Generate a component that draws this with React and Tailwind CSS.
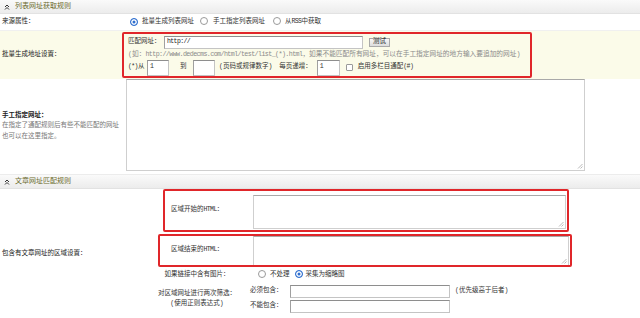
import React from "react"

const Lat = ({ children }) => <span className="tracking-[-0.6px]">{children}</span>

const Radio = ({ on }) => (
  <span
    className={
      on
        ? "inline-block w-[8px] h-[8px] rounded-full border border-[#2f6fcf] bg-[#2f6fcf] shadow-[inset_0_0_0_1.5px_#fff]"
        : "inline-block w-[8px] h-[8px] rounded-full border border-[#9a9a9a] bg-white"
    }
  />
)

const Box = ({ className }) => (
  <span className={`inline-block border border-[#c4c4c4] border-t-[#8e8e8e] border-l-[#a0a0a0] bg-white ${className}`} />
)

const Area = ({ className }) => (
  <div className={`relative border border-[#cfcfcf] border-t-[#a9a9a9] bg-white ${className}`}>
    <svg className="absolute right-[1px] bottom-[1px]" width="6" height="6" viewBox="0 0 6 6">
      <path d="M5.5 1 L1 5.5 M5.5 3.5 L3.5 5.5" stroke="#a8a8a8" strokeWidth="0.8" />
    </svg>
  </div>
)

const Header = ({ title }) => (
  <div className="h-[14px] flex items-center gap-[5px] pl-[4px] border-b border-[#e2e2e2] bg-gradient-to-b from-[#fafafa] to-[#ececec] text-[#6b6b2c] text-[7px]">
    <svg width="6" height="6" viewBox="0 0 6 6">
      <path d="M1 3 L3 1 L5 3 M1 5.5 L3 3.5 L5 5.5" stroke="#333" strokeWidth="1" fill="none" />
    </svg>
    <span>{title}</span>
  </div>
)

export default function App() {
  return (
    <div className="w-[640px] h-[318px] overflow-hidden bg-white text-[#333] text-[6.5px] leading-none font-['Liberation_Mono','Noto_Sans_CJK_SC',monospace]">
      <Header title="列表网址获取规则" />

      {/* 来源属性 */}
      <div className="h-[17px] flex items-center border-b border-[#f0f0f0]">
        <div className="w-[122px] pl-[2px] text-[#222]">来源属性：</div>
        <div className="flex items-center pl-[8px]">
          <Radio on />
          <span className="ml-[4px]">批量生成列表网址</span>
          <span className="ml-[6px]"><Radio /></span>
          <span className="ml-[5px]">手工指定列表网址</span>
          <span className="ml-[8px]"><Radio /></span>
          <span className="ml-[4px]">从<Lat>RSS</Lat>中获取</span>
        </div>
      </div>

      {/* 批量生成地址设置 */}
      <div className="h-[48px] flex items-center bg-[#fbfbe9]">
        <div className="w-[122px] pl-[2px] text-[#222]">批量生成地址设置：</div>
        <div className="w-[410px] h-[46px] border-2 border-[#e0262a] rounded-[2px] pl-[4px] flex flex-col">
          <div className="h-[14px] flex items-center mt-[1px]">
            <span className="w-[36px]">匹配网址：</span>
            <Box className="w-[199px] h-[13px]" />
            <span className="-ml-[196px] w-[196px] text-[#222]"><Lat>http://</Lat></span>
            <span className="ml-[6px] px-[3px] h-[9px] flex items-center border border-[#a9a9a9] bg-gradient-to-b from-[#f7f7f7] to-[#dcdcdc] text-[#222]">测试</span>
          </div>
          <div className="h-[10px] flex items-center text-[#8a8a8a] text-[6.7px] whitespace-nowrap">
            (如：<Lat>http://www.dedecms.com/html/test/list_(*).html</Lat>，如果不能匹配所有网址，可以在手工指定网址的地方输入要追加的网址)
          </div>
          <div className="h-[17px] flex items-center">
            <span className="w-[19px]"><Lat>(*)</Lat>从</span>
            <Box className="w-[22px] h-[16px]" />
            <span className="-ml-[19px] w-[19px]"><Lat>1</Lat></span>
            <span className="ml-[11px] w-[13px]">到</span>
            <Box className="w-[22px] h-[16px]" />
            <span className="ml-[4px]">(页码或规律数字)</span>
            <span className="ml-[7px]">每页递增：</span>
            <Box className="ml-[5px] w-[23px] h-[16px]" />
            <span className="-ml-[20px] w-[20px]"><Lat>1</Lat></span>
            <span className="ml-[6px] w-[7px] h-[7px] border border-[#9a9a9a] rounded-[1px] bg-white" />
            <span className="ml-[5px]">启用多栏目通配<Lat>(#)</Lat></span>
          </div>
        </div>
      </div>

      {/* 手工指定网址 */}
      <div className="h-[96px] flex items-center border-b border-[#ececec]">
        <div className="w-[126px] pl-[2px] flex flex-col gap-[4px]">
          <span className="font-bold text-[#222]">手工指定网址：</span>
          <span className="text-[#777]">在指定了通配规则后有些不能匹配的网址</span>
          <span className="text-[#777]">也可以在这里指定。</span>
        </div>
        <Area className="self-start w-[459px] h-[92px]" />
      </div>

      <Header title="文章网址匹配规则" />

      {/* 区域设置 */}
      <div className="h-[129px] flex items-center">
        <div className="w-[122px] pl-[2px] text-[#222] mt-[1px]">包含有文章网址的区域设置：</div>
        <div className="flex flex-col self-start">
          <div className="ml-[41px] w-[406px] h-[43px] border-2 border-[#e0262a] rounded-[2px] flex items-center">
            <span className="w-[88px] pl-[6px]">区域开始的<Lat>HTML</Lat>：</span>
            <Area className="w-[313px] h-[34px] mt-[2px]" />
          </div>
          <div className="mt-[2px] ml-[36px] w-[414px] h-[33px] border-2 border-[#e0262a] rounded-[2px] flex items-center">
            <span className="w-[93px] pl-[11px]">区域结束的<Lat>HTML</Lat>：</span>
            <Area className="w-[316px] h-[29px] border-b-0" />
          </div>
          <div className="h-[17px] flex items-center">
            <span className="ml-[36px] w-[78px] text-center">如果链接中含有图片：</span>
            <span className="ml-[22px]"><Radio /></span>
            <span className="ml-[4px]">不处理</span>
            <span className="ml-[5px]"><Radio on /></span>
            <span className="ml-[3px]">采集为缩略图</span>
          </div>
          <div className="flex items-center mt-[1px]">
            <div className="ml-[32px] w-[86px] flex flex-col items-center gap-[4px]">
              <span>对区域网址进行两次筛选：</span>
              <span>(使用正则表达式)</span>
            </div>
            <div className="ml-[10px] flex flex-col gap-[2px]">
              <div className="h-[13px] flex items-center">
                <span className="w-[40px]">必须包含：</span>
                <Box className="w-[160px] h-[13px]" />
                <span className="ml-[5px]">(优先级高于后者)</span>
              </div>
              <div className="h-[13px] flex items-center">
                <span className="w-[40px]">不能包含：</span>
                <Box className="w-[160px] h-[13px]" />
              </div>
            </div>
          </div>
        </div>
      </div>
    </div>
  )
}
